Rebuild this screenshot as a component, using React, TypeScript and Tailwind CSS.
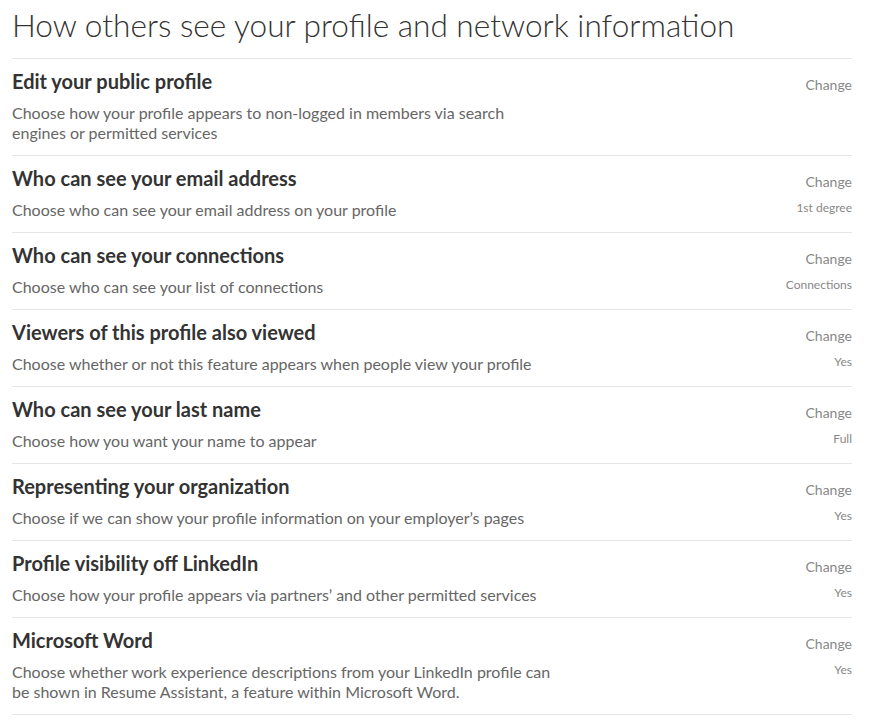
import React from 'react';

interface Setting {
  title: string;
  description: React.ReactNode;
  value?: string;
}

const settings: Setting[] = [
  {
    title: 'Edit your public profile',
    description: (
      <>
        Choose how your profile appears to non-logged in members via search
        <br />
        engines or permitted services
      </>
    ),
  },
  {
    title: 'Who can see your email address',
    description: 'Choose who can see your email address on your profile',
    value: '1st degree',
  },
  {
    title: 'Who can see your connections',
    description: 'Choose who can see your list of connections',
    value: 'Connections',
  },
  {
    title: 'Viewers of this profile also viewed',
    description: 'Choose whether or not this feature appears when people view your profile',
    value: 'Yes',
  },
  {
    title: 'Who can see your last name',
    description: 'Choose how you want your name to appear',
    value: 'Full',
  },
  {
    title: 'Representing your organization',
    description: 'Choose if we can show your profile information on your employer\u2019s pages',
    value: 'Yes',
  },
  {
    title: 'Profile visibility off LinkedIn',
    description: 'Choose how your profile appears via partners\u2019 and other permitted services',
    value: 'Yes',
  },
  {
    title: 'Microsoft Word',
    description: (
      <>
        Choose whether work experience descriptions from your LinkedIn profile can
        <br />
        be shown in Resume Assistant, a feature within Microsoft Word.
      </>
    ),
    value: 'Yes',
  },
];

const SettingRow: React.FC<{ setting: Setting }> = ({ setting }) => (
  <div className="flex justify-between border-b border-[#e6e6e6] pt-[10px] pb-[12px]">
    <div>
      <h3 className="text-[20px] leading-[24px] font-bold text-[#333333]">{setting.title}</h3>
      <p className="mt-[10px] text-[16px] leading-[20px] text-[#666666]">{setting.description}</p>
    </div>
    <div className="flex flex-col items-end pt-[7px]">
      <button className="text-[14px] leading-[18px] text-[#888888]">Change</button>
      {setting.value && (
        <span className="mt-[10px] text-[12px] leading-[14px] text-[#888888]">{setting.value}</span>
      )}
    </div>
  </div>
);

export default function App() {
  return (
    <div className="min-h-screen bg-white pl-[12px] pr-[18px]" style={{ fontFamily: 'Lato, "Open Sans", sans-serif' }}>
      <h1 className="pt-[5px] pb-[13px] text-[31.6px] leading-[40px] font-light text-[#333333] border-b border-[#e6e6e6]">
        How others see your profile and network information
      </h1>
      {settings.map((s, i) => (
        <SettingRow key={i} setting={s} />
      ))}
    </div>
  );
}
